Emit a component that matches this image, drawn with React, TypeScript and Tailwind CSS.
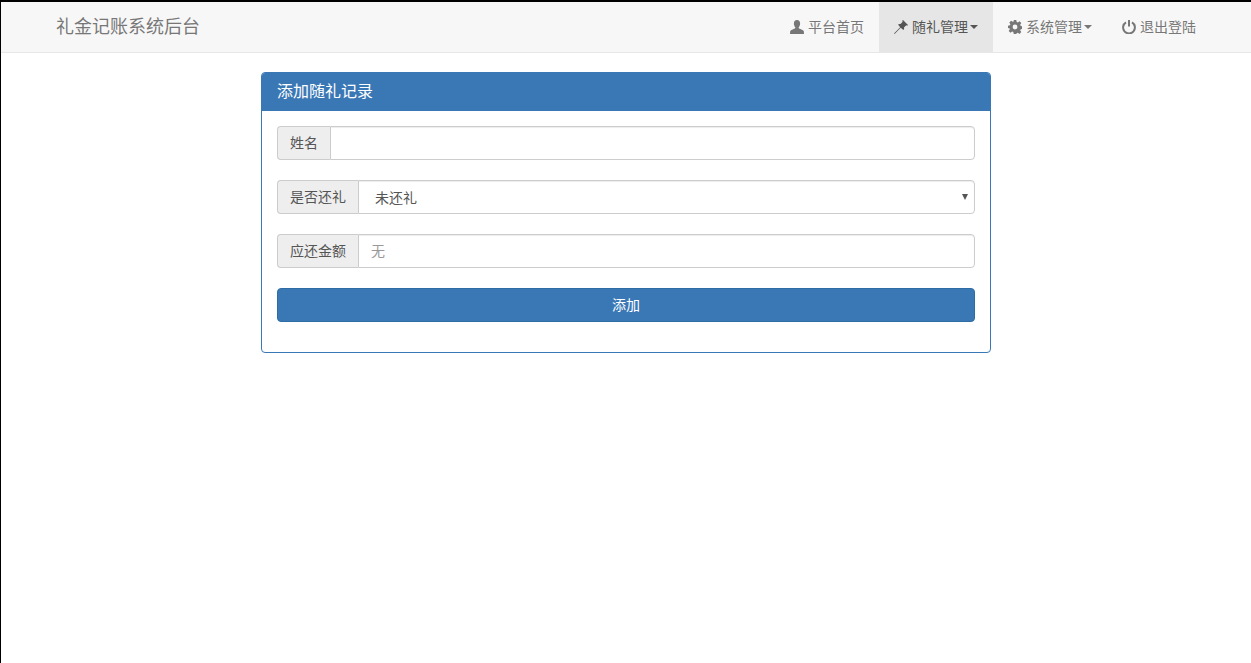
const font = "font-['Liberation_Sans','Noto_Sans_CJK_SC',sans-serif]";

const UserIcon = (
  <svg width="14" height="14" viewBox="0 0 14 14" fill="currentColor">
    <path d="M7 0C4.9 0 3.9 1.5 3.9 3.4c0 1.4.5 2.9 1.3 3.9.3.4.2 1-.3 1.3C3.2 9.500.8 9.900.2 11.300L0 14h14l-.2-2.700c-.6-1.400-3-1.800-4.700-2.700-.5-.3-.6-.9-.3-1.300.8-1 1.300-2.500 1.300-3.900C10.100 1.500 9.100 0 7 0z" />
  </svg>
);

const PinIcon = (
  <svg width="14" height="14" viewBox="0 0 14 14" fill="currentColor">
    <path d="M9 0l5 5-.8.8-1-.5L10 7.500c.3 1.100 0 2-.6 2.500L6.700 7.800.6 14l-.6-.6 6.200-6.100L4 4.600c.5-.6 1.400-.9 2.500-.6l2.200-2.200-.5-1z" />
  </svg>
);

const GearIcon = (
  <svg width="14" height="14" viewBox="0 0 14 14" fill="currentColor">
    <path
      fillRule="evenodd"
      d="M5.700 0h2.600l.4 1.900 1.100.5L11.500 1.300l1.800 1.800-1.100 1.700.5 1.100 1.900.4v2.600l-1.900.4-.5 1.100 1.100 1.700-1.800 1.800-1.700-1.100-1.100.5L8.300 14H5.700l-.4-1.900-1.100-.5-1.700 1.100-1.800-1.800 1.100-1.700-.5-1.100L0 8.300V5.700l1.900-.4.5-1.100-1.100-1.700 1.800-1.800 1.700 1.100 1.100-.5zM7 4.600a2.400 2.400 0 1 0 0 4.800 2.400 2.400 0 0 0 0-4.800z"
    />
  </svg>
);

const PowerIcon = (
  <svg width="14" height="14" viewBox="0 0 14 14" fill="none" stroke="currentColor" strokeWidth="2">
    <path d="M4 2.400a5.900 5.900 0 1 0 6 0" />
    <path d="M7 0v6.500" />
  </svg>
);

function NavItem({ icon, label, caret, active }: { icon: React.ReactNode; label: string; caret?: boolean; active?: boolean }) {
  return (
    <a className={`flex h-[50px] items-center px-[15px] text-sm ${active ? "bg-[#e6e6e6] text-[#555555]" : "text-[#777777]"}`}>
      <span className="mr-[4px] flex w-[14px] justify-center">{icon}</span>
      <span>{label}</span>
      {caret && <span className="ml-[2px] h-0 w-0 border-x-4 border-t-4 border-x-transparent border-t-current" />}
    </a>
  );
}

function Group({ label, children }: { label: string; children: React.ReactNode }) {
  return (
    <div className="mb-5 flex h-[34px] text-sm text-[#555555]">
      <span className="flex items-center rounded-l border border-r-0 border-[#cccccc] bg-[#eeeeee] px-3">{label}</span>
      {children}
    </div>
  );
}

export default function App() {
  return (
    <div className={`min-h-[663px] border-l border-t-2 border-black bg-white ${font}`}>
      <nav className="flex h-[51px] items-start justify-between border-b border-[#e7e7e7] bg-[#f7f7f7] pl-[55px] pr-[40px]">
        <span className="flex h-[50px] items-center text-lg text-[#777777]">礼金记账系统后台</span>
        <div className="flex">
          <NavItem icon={UserIcon} label="平台首页" />
          <NavItem icon={PinIcon} label="随礼管理" caret active />
          <NavItem icon={GearIcon} label="系统管理" caret />
          <NavItem icon={PowerIcon} label="退出登陆" />
        </div>
      </nav>
      <div className="mx-auto mt-[19px] h-[281px] w-[730px] rounded border border-[#3a78b5] bg-white">
        <div className="flex h-[38px] items-center rounded-t-[3px] bg-[#3a78b5] px-[15px] text-base text-white">添加随礼记录</div>
        <div className="px-[15px] pt-[15px]">
          <Group label="姓名">
            <input className="min-w-0 flex-1 rounded-r border border-[#cccccc] bg-white px-3 shadow-[inset_0_1px_1px_rgba(0,0,0,0.075)] outline-none" />
          </Group>
          <Group label="是否还礼">
            <div className="relative flex flex-1 items-center rounded-r border border-[#cccccc] bg-white pl-4 pt-px shadow-[inset_0_1px_1px_rgba(0,0,0,0.075)]">
              未还礼
              <span className="absolute right-[6px] top-[13px] h-0 w-0 border-x-[3px] border-t-[6px] border-x-transparent border-t-[#555555]" />
            </div>
          </Group>
          <Group label="应还金额">
            <input placeholder="无" className="min-w-0 flex-1 rounded-r border border-[#cccccc] bg-white px-3 shadow-[inset_0_1px_1px_rgba(0,0,0,0.075)] outline-none placeholder:text-[#999999]" />
          </Group>
          <button className="flex h-[34px] w-full items-center justify-center rounded border border-[#2e6da4] bg-[#3a78b5] text-sm text-white">添加</button>
        </div>
      </div>
    </div>
  );
}
